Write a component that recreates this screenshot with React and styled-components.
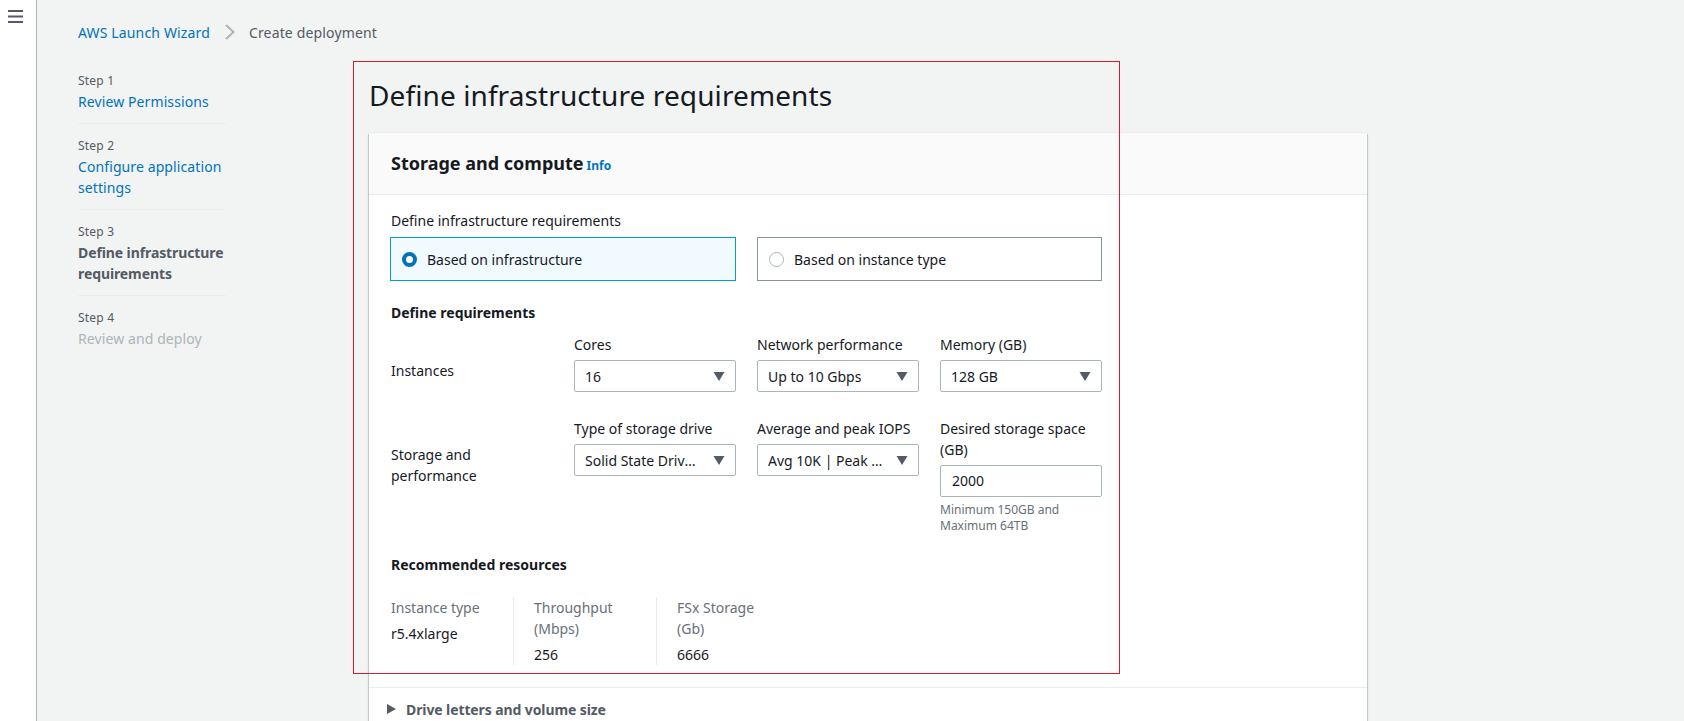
import React from 'react';
import styled, { createGlobalStyle } from 'styled-components';

const GlobalStyle = createGlobalStyle`
    html, body {
        margin: 0;
        height: 100%;
        overflow: hidden;
        background: #f2f3f3;
        color: #16191f;
        font-family: "Noto Sans", "Open Sans", sans-serif;
        font-size: 14px;
        line-height: 21px;
    }
    * { box-sizing: border-box; }
`;

const Page = styled.div`
    display: flex;
    height: 721px;
    overflow: hidden;
`;

const Rail = styled.div`
    flex: 0 0 37px;
    background: #fff;
    border-right: 1px solid #aab7b8;
    padding: 9px 8px;
    color: #545b64;
`;

const Main = styled.div`
    flex: 1;
    min-width: 0;
    padding: 21px 0 0 41px;
`;

const Breadcrumbs = styled.nav`
    display: flex;
    align-items: center;
    height: 22px;
    color: #545b64;
    letter-spacing: 0.15px;
`;

const Crumb = styled.a`
    color: #0073bb;
`;

const CrumbSep = styled.span`
    display: flex;
    margin: 0 14px 0 15px;
    color: #aab7b8;
`;

const Body = styled.div`
    display: flex;
    margin-top: 18px;
`;

const Steps = styled.ol`
    flex: 0 0 148px;
    margin: 8px 0 0;
    padding: 0;
    list-style: none;
`;

const StepItem = styled.li`
    padding-bottom: 11px;
    margin-bottom: 10px;
    border-bottom: ${p => (p.$last ? 'none' : '1px solid #eaeded')};
`;

const StepNo = styled.div`
    padding-top: 1px;
    font-size: 12px;
    line-height: 21px;
    letter-spacing: 0.2px;
    color: #545b64;
`;

const StepName = styled.div`
    color: ${p => (p.$state === 'link' ? '#0073bb' : p.$state === 'off' ? '#aab7b8' : '#545b64')};
    font-weight: ${p => (p.$state === 'now' ? 700 : 400)};
    letter-spacing: ${p => (p.$state === 'now' ? '-0.1px' : '0.1px')};
`;

const Content = styled.section`
    position: relative;
    margin-left: 143px;
    width: 998px;
`;

const Highlight = styled.div`
    position: absolute;
    left: -16px;
    top: 0;
    width: 767px;
    height: 613px;
    border: 1px solid #d91c2a;
    pointer-events: none;
`;

const Title = styled.h1`
    margin: 7px 0 11px;
    font-size: 28px;
    line-height: 54px;
    font-weight: 400;
    letter-spacing: 0.1px;
`;

const Card = styled.div`
    background: #fff;
    box-shadow: 0 -1px 0 0 #eaeded, 0 1px 1px 0 rgba(0, 28, 36, 0.3), 1px 1px 1px 0 rgba(0, 28, 36, 0.15), -1px 1px 1px 0 rgba(0, 28, 36, 0.15);
`;

const CardHeader = styled.header`
    display: flex;
    align-items: baseline;
    gap: 3px;
    height: 62px;
    padding: 17px 21px 0 22px;
    background: #fafafa;
    border-bottom: 1px solid #eaeded;
`;

const CardTitle = styled.h2`
    margin: 0;
    font-size: 18px;
    line-height: 26px;
    font-weight: 700;
`;

const InfoLink = styled.a`
    color: #0073bb;
    font-size: 12px;
    font-weight: 700;
`;

const CardBody = styled.div`
    padding: 15px 21px 22px;
`;

const Grid = styled.div`
    display: grid;
    grid-template-columns: 163px 162px 162px 162px;
    column-gap: 21px;
`;

const GroupLabel = styled.div`
    padding-left: 1px;
    line-height: 21px;
`;

const FieldLabel = styled.div`
    line-height: 21px;
`;

const Tiles = styled.div`
    display: grid;
    grid-template-columns: 346px 345px;
    column-gap: 21px;
    margin-top: 6px;
`;

const Tile = styled.label`
    display: flex;
    align-items: center;
    gap: 10px;
    height: 44px;
    padding: 0 11px;
    background: ${p => (p.$selected ? '#f1faff' : '#fff')};
    border: 1px solid ${p => (p.$selected ? '#00a1c9' : '#879596')};
`;

const Radio = styled.span`
    flex: 0 0 15px;
    height: 15px;
    border-radius: 50%;
    background: #fff;
    border: ${p => (p.$on ? '4px solid #0073bb' : '1px solid #aab7b8')};
`;

const SectionTitle = styled.h3`
    margin: ${p => p.$top}px 0 0;
    padding-left: 1px;
    font-size: 14px;
    line-height: 21px;
    font-weight: 700;
`;

const RowLabel = styled.div`
    padding-top: ${p => p.$top}px;
    padding-left: 1px;
`;

const Field = styled.div`
    min-width: 0;
    margin-top: ${p => p.$top}px;
`;

const SelectBox = styled.div`
    display: flex;
    align-items: center;
    justify-content: space-between;
    height: 32px;
    margin-top: 5px;
    padding: 0 9px 0 10px;
    background: #fff;
    border: 1px solid #aab7b8;
    border-radius: 2px;
`;

const SelectText = styled.span`
    overflow: hidden;
    white-space: nowrap;
    text-overflow: ellipsis;
    min-width: 0;
    margin-right: 10px;
`;

const TextBox = styled.div`
    height: 32px;
    margin-top: 5px;
    padding: 0 11px;
    line-height: 30px;
    background: #fff;
    border: 1px solid #aab7b8;
    border-radius: 2px;
`;

const Hint = styled.div`
    margin-top: 5px;
    font-size: 12px;
    line-height: 16px;
    color: #687078;
`;

const Resources = styled.div`
    display: flex;
    margin-top: 22px;
`;

const Resource = styled.div`
    width: ${p => p.$w}px;
    height: 68px;
    padding-left: ${p => (p.$first ? 1 : 20)}px;
    border-left: ${p => (p.$first ? 'none' : '1px solid #eaeded')};
`;

const ResourceName = styled.div`
    color: #687078;
`;

const ResourceValue = styled.div`
    margin-top: 5px;
`;

const Expander = styled.div`
    display: flex;
    align-items: center;
    gap: 10px;
    height: 43px;
    padding: 0 0 0 18px;
    border-top: 1px solid #eaeded;
    color: #545b64;
    font-weight: 700;
    letter-spacing: -0.1px;
`;

const Caret = () => (
    <svg width="14" height="14" viewBox="0 0 14 14" style={{ flex: 'none' }}>
        <path d="M1.5 3h11L7 12z" fill="#545b64" />
    </svg>
);

const Select = ({ label, value, top }) => (
    <Field $top={top}>
        <FieldLabel>{label}</FieldLabel>
        <SelectBox>
            <SelectText>{value}</SelectText>
            <Caret />
        </SelectBox>
    </Field>
);

const steps = [
    { no: 'Step 1', name: 'Review Permissions', state: 'link' },
    { no: 'Step 2', name: 'Configure application settings', state: 'link' },
    { no: 'Step 3', name: 'Define infrastructure requirements', state: 'now' },
    { no: 'Step 4', name: 'Review and deploy', state: 'off' },
];

const App = () => {
    return (
        <Page>
            <GlobalStyle />
            <Rail>
                <svg width="16" height="16" viewBox="0 0 16 16" fill="none" stroke="currentColor" strokeWidth="2">
                    <path d="M0 2h15M0 7.5h15M0 13h15" />
                </svg>
            </Rail>
            <Main>
                <Breadcrumbs>
                    <Crumb>AWS Launch Wizard</Crumb>
                    <CrumbSep>
                        <svg width="10" height="16" viewBox="0 0 10 16" fill="none" stroke="currentColor" strokeWidth="2">
                            <path d="M1 1l7.5 7L1 15" />
                        </svg>
                    </CrumbSep>
                    <span>Create deployment</span>
                </Breadcrumbs>
                <Body>
                    <Steps>
                        {steps.map((step, i) => (
                            <StepItem key={step.no} $last={i === steps.length - 1}>
                                <StepNo>{step.no}</StepNo>
                                <StepName $state={step.state}>{step.name}</StepName>
                            </StepItem>
                        ))}
                    </Steps>
                    <Content>
                        <Title>Define infrastructure requirements</Title>
                        <Card>
                            <CardHeader>
                                <CardTitle>Storage and compute</CardTitle>
                                <InfoLink>Info</InfoLink>
                            </CardHeader>
                            <CardBody>
                                <GroupLabel>Define infrastructure requirements</GroupLabel>
                                <Tiles>
                                    <Tile $selected>
                                        <Radio $on />
                                        Based on infrastructure
                                    </Tile>
                                    <Tile>
                                        <Radio />
                                        Based on instance type
                                    </Tile>
                                </Tiles>
                                <SectionTitle $top={21}>Define requirements</SectionTitle>
                                <Grid>
                                    <RowLabel $top={37}>Instances</RowLabel>
                                    <Select label="Cores" value="16" top={11} />
                                    <Select label="Network performance" value="Up to 10 Gbps" top={11} />
                                    <Select label="Memory (GB)" value="128 GB" top={11} />
                                    <RowLabel $top={52}>Storage and performance</RowLabel>
                                    <Select label="Type of storage drive" value="Solid State Drive (SSD)" top={26} />
                                    <Select label="Average and peak IOPS" value="Avg 10K | Peak 20K" top={26} />
                                    <Field $top={26}>
                                        <FieldLabel>Desired storage space (GB)</FieldLabel>
                                        <TextBox>2000</TextBox>
                                        <Hint>Minimum 150GB and Maximum 64TB</Hint>
                                    </Field>
                                </Grid>
                                <SectionTitle $top={20}>Recommended resources</SectionTitle>
                                <Resources>
                                    <Resource $first $w={123}>
                                        <ResourceName>Instance type</ResourceName>
                                        <ResourceValue>r5.4xlarge</ResourceValue>
                                    </Resource>
                                    <Resource $w={143}>
                                        <ResourceName>Throughput (Mbps)</ResourceName>
                                        <ResourceValue>256</ResourceValue>
                                    </Resource>
                                    <Resource $w={125}>
                                        <ResourceName>FSx Storage (Gb)</ResourceName>
                                        <ResourceValue>6666</ResourceValue>
                                    </Resource>
                                </Resources>
                            </CardBody>
                            <Expander>
                                <svg width="9" height="10" viewBox="0 0 9 10" style={{ flex: 'none' }}>
                                    <path d="M0 0l9 5-9 5z" fill="#545b64" />
                                </svg>
                                Drive letters and volume size
                            </Expander>
                        </Card>
                        <Highlight />
                    </Content>
                </Body>
            </Main>
        </Page>
    );
};

export default App;
